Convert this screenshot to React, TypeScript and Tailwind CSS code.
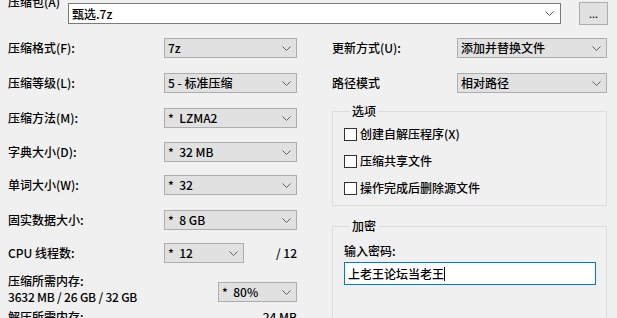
import React from "react";

function Chevron() {
  return (
    <svg width="9" height="5" viewBox="0 0 9 5" className="shrink-0">
      <path d="M0.5 0.5 L4.5 4.5 L8.5 0.5" fill="none" stroke="#606060" strokeWidth="1" />
    </svg>
  );
}

function Combo({ value, className = "" }: { value: string; className?: string }) {
  return (
    <div
      className={`flex h-[20px] items-center justify-between border border-[#adadad] bg-[#e1e1e1] pl-[3px] pr-[5px] ${className}`}
    >
      <span className="whitespace-pre leading-[14px]">{value}</span>
      <Chevron />
    </div>
  );
}

function Row({ label, value, className = "" }: { label: string; value: string; className?: string }) {
  return (
    <div className={`flex h-[20px] items-center ${className}`}>
      <span className="w-[156px] whitespace-nowrap leading-[14px]">{label}</span>
      <Combo value={value} className="w-[133px]" />
    </div>
  );
}

function Check({ label }: { label: string }) {
  return (
    <div className="flex h-[18px] items-center gap-[3px]">
      <span className="h-[13px] w-[13px] border border-[#333333] bg-white" />
      <span className="whitespace-nowrap leading-[14px]">{label}</span>
    </div>
  );
}

export default function App() {
  return (
    <div
      className="h-[318px] w-[617px] overflow-hidden bg-[#f0f0f0] pl-[8px] text-[12px] font-medium text-black"
      style={{ fontFamily: '"Noto Sans CJK SC", "Noto Sans", sans-serif' }}
    >
      {/* archive name */}
      <div className="flex items-start">
        <span className="-mt-[5px] w-[60px] whitespace-nowrap leading-[14px]">压缩包(A)</span>
        <div className="mt-[3px] flex h-[21px] w-[493px] items-center justify-between border border-[#7a7a7a] bg-white pl-[3px] pr-[6px]">
          <span className="leading-[14px]">甄选.7z</span>
          <Chevron />
        </div>
        <div className="ml-[18px] mt-[2px] flex h-[23px] w-[29px] items-start justify-center border border-[#adadad] bg-[#e1e1e1] pt-[6px] text-[10px] leading-[10px]">
          ...
        </div>
      </div>

      <div className="flex">
        {/* left column */}
        <div className="w-[289px]">
          <Row label="压缩格式(F):" value="7z" className="mt-[13px]" />
          <Row label="压缩等级(L):" value="5 - 标准压缩" className="mt-[15px]" />
          <Row label="压缩方法(M):" value="*  LZMA2" className="mt-[15px]" />
          <Row label="字典大小(D):" value="*  32 MB" className="mt-[14px]" />
          <Row label="单词大小(W):" value="*  32" className="mt-[13px]" />
          <Row label="固实数据大小:" value="*  8 GB" className="mt-[15px]" />
          <div className="mt-[13px] flex h-[20px] items-center">
            <span className="w-[156px] whitespace-nowrap leading-[14px]">CPU 线程数:</span>
            <Combo value="*  12" className="w-[80px]" />
            <span className="ml-auto leading-[14px]">/ 12</span>
          </div>
          <div className="mt-[10px] flex items-start justify-between">
            <div className="leading-[16px]">
              <div>压缩所需内存:</div>
              <div className="tracking-[-0.2px]">3632 MB / 26 GB / 32 GB</div>
            </div>
            <Combo value="*  80%" className="mt-[9px] w-[79px]" />
          </div>
          <div className="mt-[4px] flex justify-between leading-[16px]">
            <span>解压所需内存:</span>
            <span>24 MB</span>
          </div>
        </div>

        {/* right column */}
        <div className="ml-[35px] w-[275px]">
          <div className="mt-[13px] flex h-[20px] items-center">
            <span className="w-[125px] leading-[14px]">更新方式(U):</span>
            <Combo value="添加并替换文件" className="w-[150px]" />
          </div>
          <div className="mt-[15px] flex h-[20px] items-center">
            <span className="w-[125px] leading-[14px]">路径模式</span>
            <Combo value="相对路径" className="w-[150px]" />
          </div>

          <fieldset className="mt-[11px] border border-[#dcdcdc] pb-[8px] pl-[11px]">
            <legend className="ml-[6px] px-[2px] leading-[14px]">选项</legend>
            <div className="mt-[7px] flex flex-col gap-[9px]">
              <Check label="创建自解压程序(X)" />
              <Check label="压缩共享文件" />
              <Check label="操作完成后删除源文件" />
            </div>
          </fieldset>

          <fieldset className="mt-[13px] h-[120px] border border-[#dcdcdc] pl-[11px]">
            <legend className="ml-[6px] px-[2px] leading-[14px]">加密</legend>
            <div className="mt-[11px] leading-[14px]">输入密码:</div>
            <div className="mt-[4px] flex h-[23px] w-[252px] items-center border border-[#0078d7] bg-white pl-[3px]">
              <span className="leading-[14px]">上老王论坛当老王</span>
              <span className="h-[14px] w-px bg-black" />
            </div>
          </fieldset>
        </div>
      </div>
    </div>
  );
}
